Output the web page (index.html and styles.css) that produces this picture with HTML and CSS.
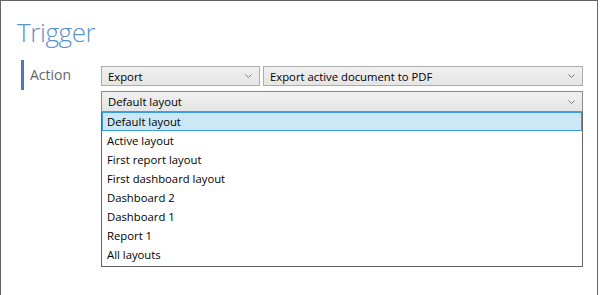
FILE: index.html
```html
<!DOCTYPE html>
<html lang="en">

<head>
  <meta charset="UTF-8">
  <meta name="viewport" content="width=device-width, initial-scale=1.0">
  <title>Trigger</title>
  <link rel="stylesheet" href="styles.css">
</head>

<body>
  <div class="window">
    <h1 class="title">Trigger</h1>
    <div class="field">
      <div class="field-label">Action</div>
      <div class="field-controls">
        <div class="combo-row">
          <div class="combo combo-small">
            <span>Export</span>
            <svg class="chevron" width="7" height="4" viewBox="0 0 7 4"><path d="M0.5 0.5 L3.5 3.5 L6.5 0.5" fill="none" stroke="#7a7a7a" stroke-width="1"/></svg>
          </div>
          <div class="combo combo-wide">
            <span>Export active document to PDF</span>
            <svg class="chevron" width="7" height="4" viewBox="0 0 7 4"><path d="M0.5 0.5 L3.5 3.5 L6.5 0.5" fill="none" stroke="#7a7a7a" stroke-width="1"/></svg>
          </div>
        </div>
        <div class="combo combo-open">
          <span>Default layout</span>
          <svg class="chevron" width="7" height="4" viewBox="0 0 7 4"><path d="M0.5 0.5 L3.5 3.5 L6.5 0.5" fill="none" stroke="#7a7a7a" stroke-width="1"/></svg>
        </div>
        <ul class="listbox">
          <li class="selected">Default layout</li>
          <li>Active layout</li>
          <li>First report layout</li>
          <li>First dashboard layout</li>
          <li>Dashboard 2</li>
          <li>Dashboard 1</li>
          <li>Report 1</li>
          <li>All layouts</li>
        </ul>
      </div>
    </div>
  </div>
</body>

</html>
```

FILE: styles.css
```css
body {
  margin: 0;
  padding: 0;
  background-color: #fff;
  font-family: "Open Sans", "Noto Sans", sans-serif;
}

.window {
  width: 596px;
  height: 295px;
  border: 1px solid #646464;
  border-bottom: none;
  box-sizing: content-box;
}

.title {
  margin: 0;
  padding: 15px 0 0 16px;
  height: 46px;
  box-sizing: border-box;
  font-size: 26px;
  font-weight: 300;
  letter-spacing: -0.4px;
  color: #5b93cc;
  line-height: 32px;
}

.field {
  display: flex;
  padding-left: 20px;
  margin-top: 13px;
}

.field-label {
  width: 71px;
  height: 30px;
  border-left: 3px solid #4a7ab5;
  padding-left: 6px;
  font-size: 14px;
  color: #666;
  line-height: 30px;
  box-sizing: content-box;
}

.field-controls {
  display: flex;
  flex-direction: column;
  margin-top: 6px;
  width: 482px;
}

.combo-row {
  display: flex;
  gap: 3px;
  margin-bottom: 5px;
}

.combo {
  display: flex;
  align-items: center;
  justify-content: space-between;
  height: 18px;
  padding: 0 7px 0 6px;
  border: 1px solid #acacac;
  background: linear-gradient(#f0f0f0, #e5e5e5);
  font-size: 11.3px;
  color: #000;
  box-sizing: content-box;
}

.combo-small {
  width: 144px;
}

.combo-wide {
  flex: 1;
}

.combo-open {
  height: 19px;
  border-color: #8a8a8a;
}

.chevron {
  display: block;
}

.listbox {
  list-style: none;
  margin: 0;
  padding: 0 0 2px 0;
  border: 1px solid #646464;
  border-top: none;
}

.listbox li {
  height: 19px;
  line-height: 19px;
  padding-left: 4px;
  font-size: 11.3px;
  color: #000;
  border: 1px solid transparent;
  border-top: none;
  border-bottom: none;
}

.listbox li.selected {
  height: 17px;
  line-height: 17px;
  background-color: #cce8f6;
  border: 1px solid #3d9be0;
}
```
